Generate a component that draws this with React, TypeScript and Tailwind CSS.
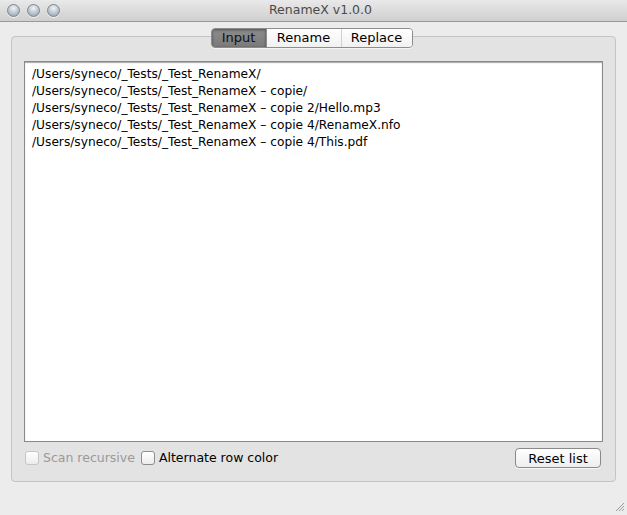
import React from 'react'

const files = [
  '/Users/syneco/_Tests/_Test_RenameX/',
  '/Users/syneco/_Tests/_Test_RenameX - copie/',
  '/Users/syneco/_Tests/_Test_RenameX - copie 2/Hello.mp3',
  '/Users/syneco/_Tests/_Test_RenameX - copie 4/RenameX.nfo',
  '/Users/syneco/_Tests/_Test_RenameX - copie 4/This.pdf',
]

const font = { fontFamily: '"DejaVu Sans", "Liberation Sans", sans-serif' }

function Light() {
  return (
    <div className="w-[13px] h-[13px] rounded-full border border-[#7d8690] bg-[radial-gradient(circle_at_50%_30%,#f2f5f8_0%,#b9c3cc_55%,#8e9aa6_100%)] shadow-[0_1px_0_rgba(255,255,255,0.7)]" />
  )
}

function Checkbox({ label, disabled }: { label: string; disabled?: boolean }) {
  return (
    <label className="flex items-center gap-[4px]">
      <span
        className={`w-[14px] h-[14px] rounded-[3px] border bg-gradient-to-b from-white to-[#ececec] ${
          disabled ? 'border-[#c6c6c6]' : 'border-[#8e8e8e]'
        }`}
      />
      <span className={`text-[12.5px] ${disabled ? 'text-[#9a9a9a]' : 'text-black'}`}>{label}</span>
    </label>
  )
}

export default function App() {
  return (
    <div className="w-[627px] h-[515px] bg-[#ececec] flex flex-col overflow-hidden" style={font}>
      {/* title bar */}
      <div className="relative h-[22px] shrink-0 bg-gradient-to-b from-[#e9e9e9] to-[#cfcfcf] border-b border-[#999] flex items-center justify-center pl-[14px]">
        <div className="absolute left-[7px] top-[4px] flex gap-[7px]">
          <Light />
          <Light />
          <Light />
        </div>
        <span className="text-[12.5px] text-[#4a4a4a]">RenameX v1.0.0</span>
      </div>

      <div className="flex-1 flex flex-col px-[11px] pt-[6px]">
        {/* tabs */}
        <div className="relative z-10 flex justify-center">
          <div className="flex h-[20px] mr-[4px] rounded-[4px] border border-[#8d8d8d] overflow-hidden text-[13px] shadow-[0_1px_0_rgba(255,255,255,0.6)]">
            <div className="w-[54px] flex items-center justify-center bg-gradient-to-b from-[#8d8d8d] to-[#7a7a7a] shadow-[inset_0_1px_3px_rgba(0,0,0,0.45)] text-[#111]">
              Input
            </div>
            <div className="w-[75px] flex items-center justify-center bg-gradient-to-b from-white to-[#f1f1f1] border-l border-[#8d8d8d] text-black">
              Rename
            </div>
            <div className="w-[71px] flex items-center justify-center bg-gradient-to-b from-white to-[#f1f1f1] border-l border-[#d0d0d0] text-black">
              Replace
            </div>
          </div>
        </div>

        {/* box */}
        <div className="-mt-[12px] h-[446px] bg-[#e3e3e3] border border-[#c4c4c4] rounded-[4px] flex flex-col px-[12px] pt-[24px] pb-[13px]">
          <div className="flex-1 bg-white border border-[#8a8a8a] shadow-[inset_0_1px_1px_rgba(0,0,0,0.35)] px-[7px] pt-[4px]">
            {files.map((f) => (
              <div key={f} className="text-[12.2px] leading-[17px] text-black whitespace-pre">
                {f.replace(/ - /g, ' – ')}
              </div>
            ))}
          </div>
          <div className="flex items-center justify-between mt-[6px] h-[20px]">
            <div className="flex items-center gap-[6px] pl-[1px]">
              <Checkbox label="Scan recursive" disabled />
              <Checkbox label="Alternate row color" />
            </div>
            <button className="w-[86px] h-[20px] mr-[2px] rounded-[4px] border border-[#8a8a8a] bg-gradient-to-b from-white to-[#eeeeee] text-[13px] text-black shadow-[0_1px_0_rgba(255,255,255,0.7)]">
              Reset list
            </button>
          </div>
        </div>

        <div className="flex-1 flex items-end justify-end pb-[3px] -mr-[9px]">
          <svg width="11" height="11" viewBox="0 0 11 11">
            <path d="M10 2 L2 10 M10 5 L5 10 M10 8 L8 10" stroke="#9a9a9a" strokeWidth="1" />
          </svg>
        </div>
      </div>
    </div>
  )
}
